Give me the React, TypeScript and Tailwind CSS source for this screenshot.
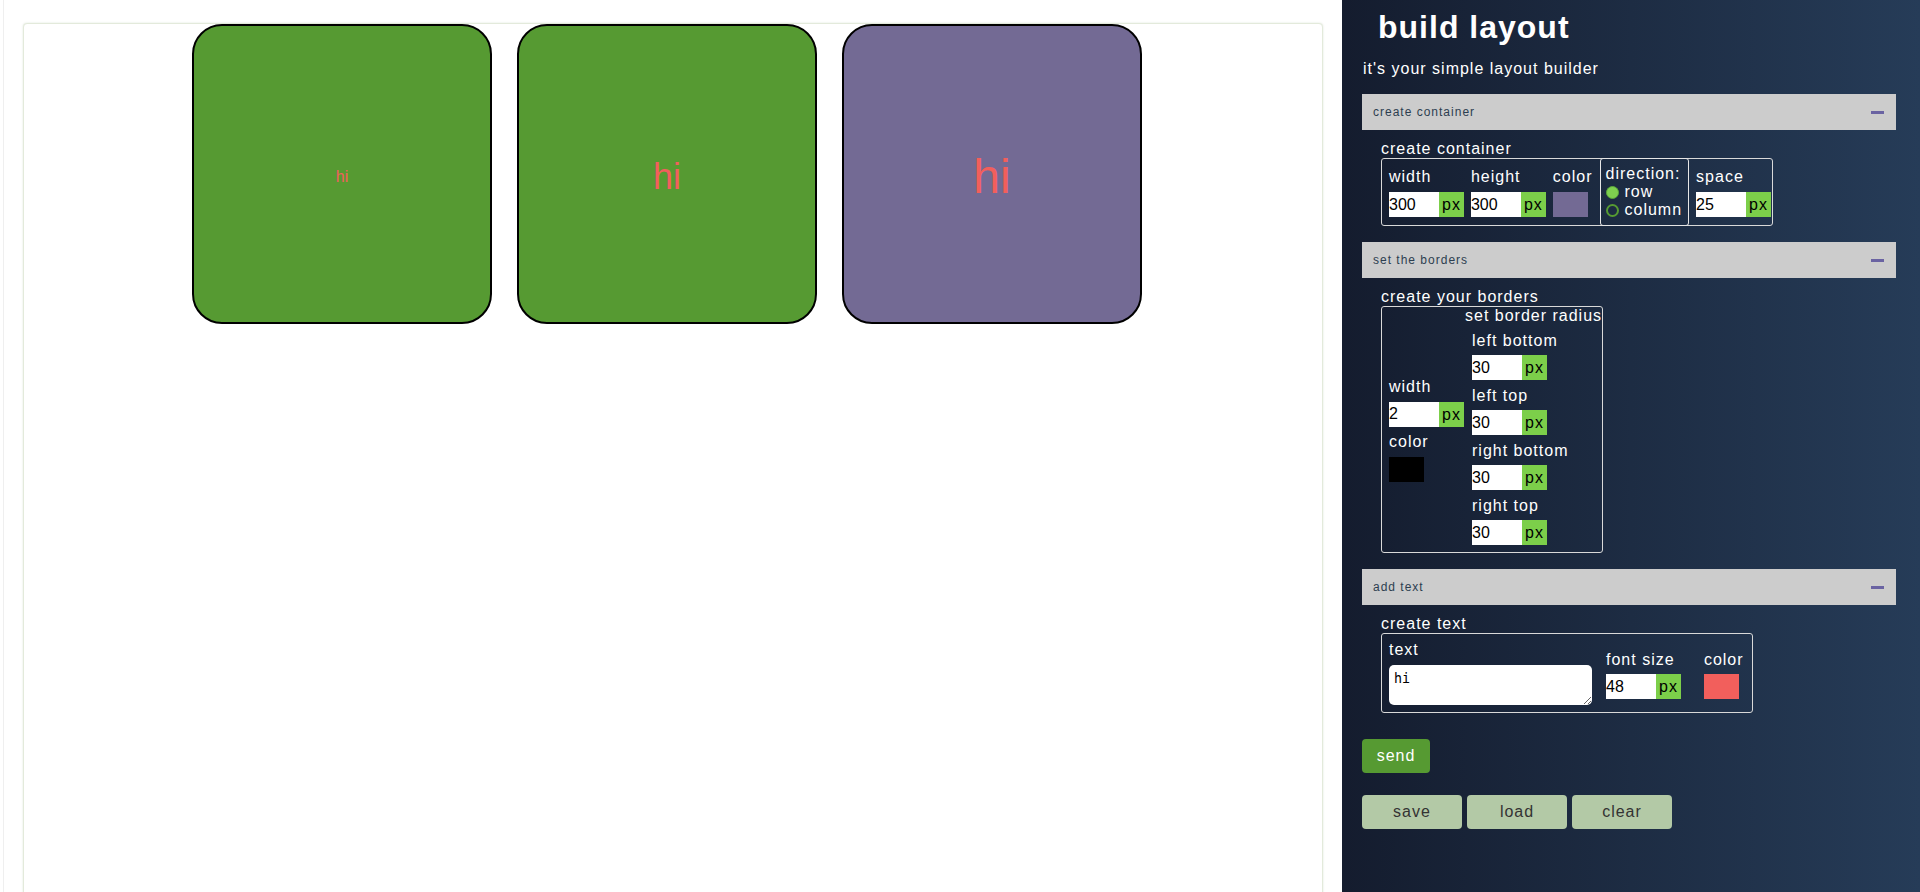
import React from "react";

const boxes = [
  { bg: "bg-[#569a32]", size: "text-[16px]" },
  { bg: "bg-[#569a32]", size: "text-[36px]" },
  { bg: "bg-[#736a94]", size: "text-[48px]" },
];

function SectionBar({ title }: { title: string }) {
  return (
    <div className="ml-[20px] mr-[24px] h-[36px] bg-[#cccccc] flex items-center justify-between pl-[11px] pr-[12px]">
      <span className="text-[12px] text-[#2c3e50]">{title}</span>
      <span className="block w-[13px] h-[3px] bg-[#6a63a2]" />
    </div>
  );
}

function Label({ children }: { children: React.ReactNode }) {
  return <div className="h-[18px] leading-[18px] text-white text-[16px] whitespace-nowrap">{children}</div>;
}

function PxInput({ value }: { value: string }) {
  return (
    <div className="flex h-[25px]">
      <input
        defaultValue={value}
        className="w-[50px] h-[25px] bg-white text-black text-[16px] tracking-normal px-0 outline-none border-0"
      />
      <span className="h-[25px] leading-[25px] px-[3px] bg-[#7ccf4a] text-black text-[16px]">px</span>
    </div>
  );
}

function Radio({ checked, label }: { checked: boolean; label: string }) {
  return (
    <div className="flex items-center h-[18px] gap-[6px]">
      {checked ? (
        <span className="block w-[13px] h-[13px] rounded-full bg-[#7ed04f] border border-[#5ca83b]" />
      ) : (
        <span className="block w-[13px] h-[13px] rounded-full border-2 border-[#569a32]" />
      )}
      <span className="text-white text-[16px] leading-[18px]">{label}</span>
    </div>
  );
}

export default function App() {
  return (
    <div
      className="flex h-screen w-full overflow-hidden bg-white"
      style={{ fontFamily: '"Liberation Sans", Arial, sans-serif' }}
    >
      {/* canvas side */}
      <div className="w-[1342px] shrink-0 pl-[3px]">
        <div className="h-full border-l border-[#efefef] pt-[23px] px-[19px]">
          <div className="h-[900px] bg-white border border-[#e3eadb] rounded-[4px] shadow-[0_0_2px_rgba(120,150,100,0.25)] flex justify-center items-start gap-[25px] pr-[12px]">
            {boxes.map((b, i) => (
              <div
                key={i}
                className={`w-[300px] h-[300px] border-2 border-black rounded-[30px] flex items-center justify-center pt-[5px] ${b.bg}`}
              >
                <span className={`text-[#f25f5c] ${b.size}`}>hi</span>
              </div>
            ))}
          </div>
        </div>
      </div>

      {/* builder panel */}
      <div className="flex-1 h-full bg-[linear-gradient(to_right,#141c2e,#263c58)] tracking-[1px] text-white">
        <h1 className="pt-[11px] pl-[36px] text-[32px] leading-[32px] font-bold">build layout</h1>
        <p className="mt-[17px] pl-[21px] text-[16px] leading-[18px]">it's your simple layout builder</p>

        <div className="mt-[16px]">
          <SectionBar title="create container" />
          <div className="pl-[39px] pt-[10px] pb-[16px]">
            <Label>create container</Label>
            <div className="inline-flex border border-[#d9d9d9] rounded-[3px] pl-[7px] pr-[1px]">
              <div className="pt-[9px] pb-[8px] mr-[7px]">
                <Label>width</Label>
                <div className="mt-[6px]">
                  <PxInput value="300" />
                </div>
              </div>
              <div className="pt-[9px] pb-[8px] mr-[7px]">
                <Label>height</Label>
                <div className="mt-[6px]">
                  <PxInput value="300" />
                </div>
              </div>
              <div className="pt-[9px] pb-[8px] mr-[7px]">
                <Label>color</Label>
                <div className="mt-[6px] w-[35px] h-[25px] bg-[#736a94]" />
              </div>
              <div className="-my-[1px] border border-[#e6e6e6] rounded-[3px] pl-[5px] pr-[6px] pt-[6px] pb-[5px] mr-[7px]">
                <Label>direction:</Label>
                <Radio checked label="row" />
                <Radio checked={false} label="column" />
              </div>
              <div className="pt-[9px] pb-[8px]">
                <Label>space</Label>
                <div className="mt-[6px]">
                  <PxInput value="25" />
                </div>
              </div>
            </div>
          </div>
        </div>

        <div>
          <SectionBar title="set the borders" />
          <div className="pl-[39px] pt-[10px] pb-[16px]">
            <Label>create your borders</Label>
            <div className="inline-flex border border-[#d9d9d9] rounded-[3px] pl-[7px]">
              <div className="flex flex-col justify-center w-[76px]">
                <Label>width</Label>
                <div className="mt-[6px]">
                  <PxInput value="2" />
                </div>
                <div className="mt-[6px]">
                  <Label>color</Label>
                </div>
                <div className="mt-[6px] w-[35px] h-[25px] bg-black" />
              </div>
              <div className="flex flex-col pb-[7px]">
                <Label>set border radius</Label>
                {["left bottom", "left top", "right bottom", "right top"].map((t) => (
                  <div key={t} className="pl-[7px] mt-[7px]">
                    <Label>{t}</Label>
                    <div className="mt-[5px]">
                      <PxInput value="30" />
                    </div>
                  </div>
                ))}
              </div>
            </div>
          </div>
        </div>

        <div>
          <SectionBar title="add text" />
          <div className="pl-[39px] pt-[10px]">
            <Label>create text</Label>
            <div className="inline-flex items-end border border-[#d9d9d9] rounded-[3px] pl-[7px] pr-[8px]">
              <div className="pt-[7px] pb-[7px]">
                <Label>text</Label>
                <textarea
                  defaultValue="hi"
                  className="block mt-[6px] w-[203px] h-[40px] bg-white rounded-[5px] px-[5px] pt-[4px] text-black text-[13.33px] tracking-normal outline-none"
                  style={{ fontFamily: '"DejaVu Sans Mono", monospace' }}
                />
              </div>
              <div className="ml-[14px] pb-[13px]">
                <Label>font size</Label>
                <div className="mt-[5px]">
                  <PxInput value="48" />
                </div>
              </div>
              <div className="ml-[23px] pb-[13px]">
                <Label>color</Label>
                <div className="mt-[5px] w-[35px] h-[25px] bg-[#f25f5c]" />
              </div>
            </div>
          </div>
        </div>

        <div className="ml-[20px] mt-[26px]">
          <button className="w-[68px] h-[34px] rounded-[4px] bg-[#569a32] text-white text-[16px]">send</button>
        </div>
        <div className="ml-[20px] mt-[22px] flex gap-[5px]">
          {["save", "load", "clear"].map((t) => (
            <button key={t} className="w-[100px] h-[34px] rounded-[4px] bg-[#b3c9a6] text-[#333333] text-[16px]">
              {t}
            </button>
          ))}
        </div>
      </div>
    </div>
  );
}
